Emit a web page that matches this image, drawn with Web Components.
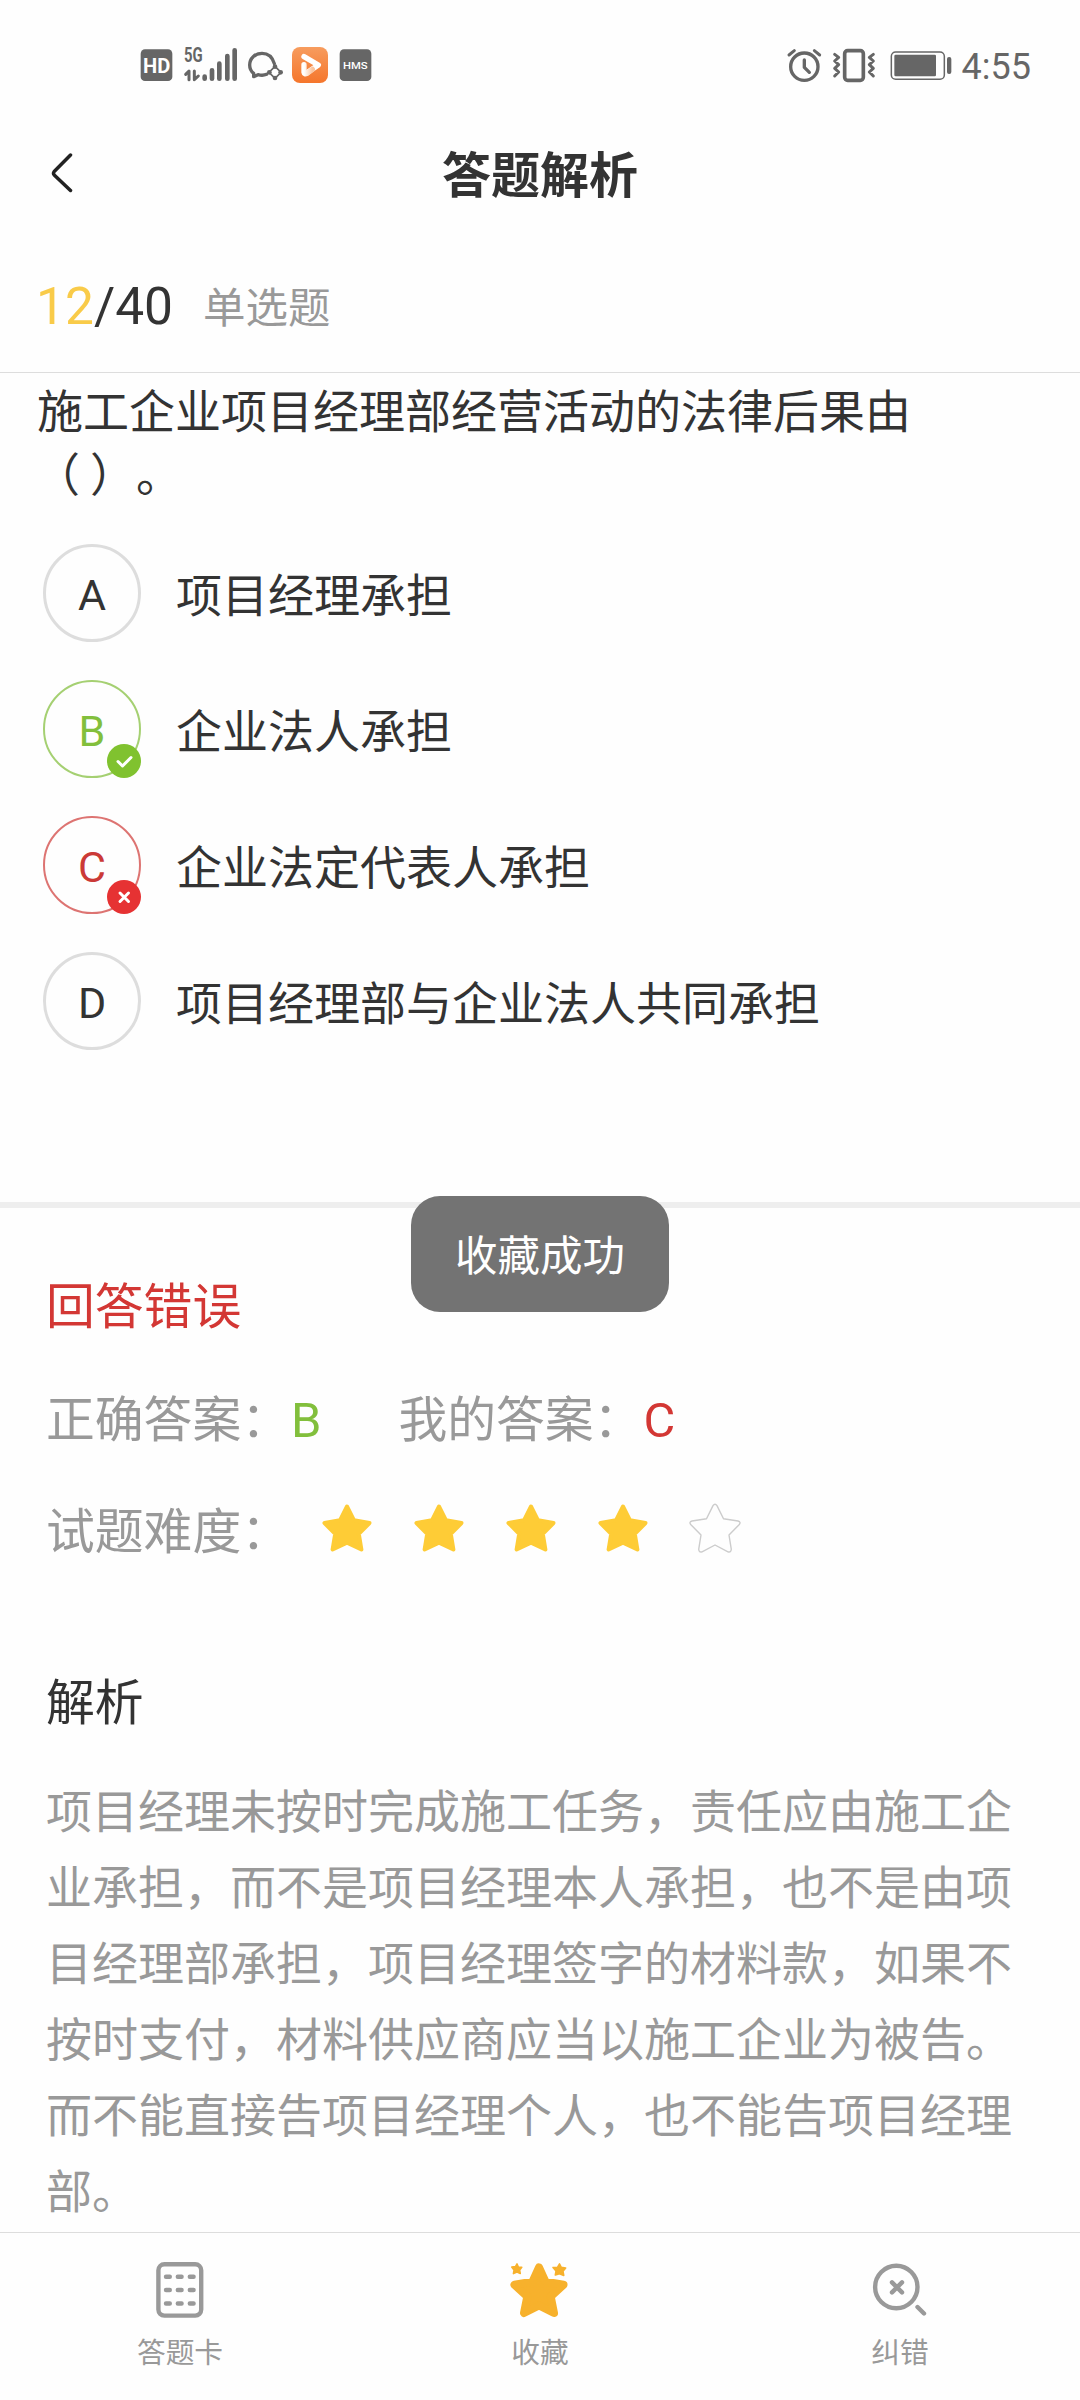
<!DOCTYPE html>
<html lang="zh-CN">
<head>
<meta charset="utf-8">
<title>答题解析</title>
<style>
    body {
        margin: 0;
        background: #fefefe;
        color: #333;
        font-family: Roboto, "Noto Sans CJK SC", sans-serif;
        text-spacing-trim: space-all;
    }
    .blank { margin-left: -3px; letter-spacing: 10px; }
</style>
</head>
<body>
<quiz-page>
    <status-bar time="4:55"></status-bar>
    <title-bar>答题解析</title-bar>
    <question-progress current="12" total="40">单选题</question-progress>
    <question-body>
        施工企业项目经理部经营活动的法律后果由<br><span class="blank">（</span>）。
        <answer-option slot="options" letter="A">项目经理承担</answer-option>
        <answer-option slot="options" letter="B" state="right">企业法人承担</answer-option>
        <answer-option slot="options" letter="C" state="wrong">企业法定代表人承担</answer-option>
        <answer-option slot="options" letter="D">项目经理部与企业法人共同承担</answer-option>
    </question-body>
    <answer-result right="B" mine="C" level="4">回答错误</answer-result>
    <answer-analysis heading="解析">项目经理未按时完成施工任务，责任应由施工企业承担，而不是项目经理本人承担，也不是由项目经理部承担，项目经理签字的材料款，如果不按时支付，材料供应商应当以施工企业为被告。而不能直接告项目经理个人，也不能告项目经理部。</answer-analysis>
    <tool-bar slot="footer">
        <tool-item icon="card">答题卡</tool-item>
        <tool-item icon="star">收藏</tool-item>
        <tool-item icon="search">纠错</tool-item>
    </tool-bar>
    <toast-message slot="toast">收藏成功</toast-message>
</quiz-page>

<script>
    class QuizPage extends HTMLElement {
        constructor() {
            super();
            this.attachShadow({ mode: 'open' });
            this.shadowRoot.innerHTML = `
                <style>
                    :host {
                        display: flex;
                        flex-direction: column;
                        position: relative;
                        width: 1080px;
                        height: 2400px;
                        overflow: hidden;
                    }
                    main { flex: 1; min-height: 0; overflow: hidden; }
                </style>
                <main><slot></slot></main>
                <slot name="footer"></slot>
                <slot name="toast"></slot>
            `;
        }
    }

    class StatusBar extends HTMLElement {
        constructor() {
            super();
            this.attachShadow({ mode: 'open' });
            this.shadowRoot.innerHTML = `
                <style>
                    :host {
                        display: flex;
                        justify-content: space-between;
                        box-sizing: border-box;
                        height: 130px;
                        padding: 46px 49px 0 140px;
                        color: #666;
                    }
                    div { display: flex; align-items: flex-start; height: 37px; }
                    svg { display: block; height: 37px; overflow: visible; fill: #666; }
                    .line { fill: none; stroke: #666; stroke-linecap: round; stroke-linejoin: round; }
                    time { font-size: 36px; line-height: 42px; margin-left: 10px; }
                </style>
                <div>
                    <svg width="33" viewBox="60 48 99 111">
                        <rect x="62" y="58" width="95" height="95" rx="13"/>
                        <text x="69" y="128" textLength="82" lengthAdjust="spacingAndGlyphs" font-size="61" font-weight="700" fill="#fff">HD</text>
                    </svg>
                    <svg width="54" viewBox="192 48 162 111" style="margin-left: 11px">
                        <text x="192" y="97" textLength="56" lengthAdjust="spacingAndGlyphs" font-size="58" font-weight="700">5G</text>
                        <path class="line" stroke-width="9" d="M197 133L207 123V149M223 123V149L235 138"/>
                        <path class="line" stroke-width="14" d="M254 140V146M276 121V146M298 101V146M322 78V146M344 61V146"/>
                    </svg>
                    <svg width="36" viewBox="384 48 108 111" style="margin-left: 10px">
                        <path class="line" stroke-width="10" d="M463 101C457 80 443 70 426 70C405 70 389 85 389 105C389 116 393 124 401 130V140L414 134C424 137 433 136 440 133"/>
                        <path class="line" stroke-width="5" d="M465 109L483 127L465 145L447 127Z"/>
                        <circle cx="465" cy="110" r="7"/><circle cx="482" cy="127" r="7"/>
                        <circle cx="465" cy="144" r="7"/><circle cx="448" cy="127" r="7"/>
                    </svg>
                    <svg width="36" viewBox="516 48 108 111" style="margin-left: 8px">
                        <defs>
                            <linearGradient id="orange" x2="0" y2="1"><stop stop-color="#f79c5e"/><stop offset="1" stop-color="#f5762c"/></linearGradient>
                            <linearGradient id="fade" x2="1" y2="0"><stop stop-color="#fff"/><stop offset="1" stop-color="#fbc59f"/></linearGradient>
                        </defs>
                        <rect x="516" y="51" width="108" height="108" rx="24" fill="url(#orange)"/>
                        <path d="M552 80L595 105L560 129" fill="none" stroke="#fff" stroke-width="16" stroke-linecap="round" stroke-linejoin="round"/>
                        <path d="M552 104V127Q553 134 561 130L577 118" fill="none" stroke="url(#fade)" stroke-width="16" stroke-linecap="round" stroke-linejoin="round"/>
                    </svg>
                    <svg width="33" viewBox="657 48 99 111" style="margin-left: 11px">
                        <rect x="659" y="58" width="95" height="95" rx="13"/>
                        <text x="669" y="116" textLength="74" lengthAdjust="spacingAndGlyphs" font-size="29" font-weight="500" fill="#fff">HMS</text>
                    </svg>
                </div>
                <div>
                    <svg width="35" viewBox="51 48 105 111">
                        <circle class="line" cx="103" cy="110" r="41" stroke-width="10"/>
                        <path class="line" stroke-width="10" d="M103 90V112L118 127"/>
                        <path class="line" stroke-width="9" d="M57 75L73 62M133 62L149 75"/>
                    </svg>
                    <svg width="44" viewBox="186 48 132 111" style="margin-left: 10px">
                        <rect class="line" x="224" y="62" width="56" height="89" rx="9" stroke-width="11"/>
                        <path class="line" stroke-width="9" d="M194 73L206 82L194 93L206 104L194 115L206 126L194 138M310 73L298 82L310 93L298 104L310 115L298 126L310 138"/>
                    </svg>
                    <svg width="62" viewBox="360 48 186 111" style="margin-left: 14px">
                        <rect class="line" x="364" y="66" width="159" height="82" rx="13" stroke-width="4.500"/>
                        <rect x="373" y="74" width="125" height="65" rx="4"/>
                        <rect x="531" y="81" width="13" height="51" rx="6"/>
                    </svg>
                    <time>${this.getAttribute('time')}</time>
                </div>
            `;
        }
    }

    class TitleBar extends HTMLElement {
        constructor() {
            super();
            this.attachShadow({ mode: 'open' });
            this.shadowRoot.innerHTML = `
                <style>
                    :host {
                        display: grid;
                        grid-template-columns: 100px 1fr 100px;
                        align-items: center;
                        height: 92px;
                    }
                    svg { margin-left: 50px; margin-top: -6px; }
                    h1 { margin: 2px 0 0; font-size: 49px; line-height: 60px; font-weight: 700; text-align: center; }
                </style>
                <svg width="24" height="40" viewBox="0 0 24 40" fill="none" stroke="#222" stroke-width="3.500" stroke-linecap="round" stroke-linejoin="round">
                    <path d="M20.500 2L4.200 18.500Q2.800 20.300 4.200 22L20.500 37.500"/>
                </svg>
                <h1><slot></slot></h1>
            `;
        }
    }

    class QuestionProgress extends HTMLElement {
        constructor() {
            super();
            this.attachShadow({ mode: 'open' });
            this.shadowRoot.innerHTML = `
                <style>
                    :host {
                        display: flex;
                        align-items: baseline;
                        box-sizing: border-box;
                        height: 151px;
                        padding: 55px 36px 0;
                        border-bottom: 1px solid #ddd;
                        font-size: 51.500px;
                        line-height: 60px;
                    }
                    b { font-weight: 400; color: #f9cb49; }
                    small { margin-left: 30px; font-size: 42.500px; line-height: 50px; color: #999; transform: translateY(-1px); }
                </style>
                <b>${this.getAttribute('current')}</b><span>/${this.getAttribute('total')}</span>
                <small><slot></slot></small>
            `;
        }
    }

    class QuestionBody extends HTMLElement {
        constructor() {
            super();
            this.attachShadow({ mode: 'open' });
            this.shadowRoot.innerHTML = `
                <style>
                    :host {
                        display: flex;
                        flex-direction: column;
                        box-sizing: border-box;
                        height: 835px;
                        padding: 8px 36px 0 37px;
                        border-bottom: 6px solid #eee;
                        font-size: 46px;
                    }
                    p { margin: 0; line-height: 63px; }
                    div { display: flex; flex-direction: column; padding: 18px 6px 0; }
                </style>
                <p><slot></slot></p>
                <div><slot name="options"></slot></div>
            `;
        }
    }

    class AnswerOption extends HTMLElement {
        constructor() {
            super();
            this.attachShadow({ mode: 'open' });
            const marks = {
                right: '<path d="M11 17.500L15.500 22L24 13.500"/>',
                wrong: '<path d="M13 13L21.500 21.500M21.500 13L13 21.500"/>'
            };
            const mark = marks[this.getAttribute('state')];
            this.shadowRoot.innerHTML = `
                <style>
                    :host { display: flex; align-items: center; gap: 35px; height: 136px; --tone: #333; --ring: #ddd; --badge: #ddd; }
                    :host([state="right"]) { --tone: #82bf3c; --ring: #a5d072; --badge: #80c22f; }
                    :host([state="wrong"]) { --tone: #cb3a37; --ring: #dd7472; --badge: #e63233; }
                    .letter {
                        position: relative;
                        box-sizing: border-box;
                        width: 98px;
                        height: 98px;
                        border: 3px solid var(--ring);
                        border-radius: 50%;
                        font-size: 43px;
                        line-height: 96px;
                        text-align: center;
                        color: var(--tone);
                    }
                    :host([state]) .letter { border-width: 2px; line-height: 98px; }
                    svg {
                        position: absolute;
                        right: -2px;
                        bottom: -2px;
                        border-radius: 50%;
                        background: var(--badge);
                        fill: none;
                        stroke: #fff;
                        stroke-width: 3;
                        stroke-linecap: round;
                        stroke-linejoin: round;
                    }
                    .text { line-height: 60px; padding-top: 6px; }
                </style>
                <span class="letter">${this.getAttribute('letter')}${mark ? `<svg width="34" height="34" viewBox="0 0 34 34">${mark}</svg>` : ''}</span>
                <span class="text"><slot></slot></span>
            `;
        }
    }

    class AnswerResult extends HTMLElement {
        constructor() {
            super();
            this.attachShadow({ mode: 'open' });
            this.shadowRoot.innerHTML = `
                <style>
                    :host { display: block; padding: 70px 46px 0; font-size: 48.800px; line-height: 60px; color: #999; }
                    h2 { margin: 0; font-size: inherit; font-weight: 400; color: #d33734; }
                    .row { display: flex; align-items: center; margin-top: 53px; }
                    .mine { margin-left: 77px; }
                    .right b { color: #82bf3c; }
                    .mine b { color: #d33734; }
                    b { font-weight: 400; margin-left: 1px; }
                    star-rating { margin-left: 31px; }
                    .row + .row { margin-top: 52px; }
                </style>
                <h2><slot></slot></h2>
                <div class="row">
                    <span class="right">正确答案：<b>${this.getAttribute('right')}</b></span>
                    <span class="mine">我的答案：<b>${this.getAttribute('mine')}</b></span>
                </div>
                <div class="row">
                    <span>试题难度：</span>
                    <star-rating value="${this.getAttribute('level')}"></star-rating>
                </div>
            `;
        }
    }

    class StarRating extends HTMLElement {
        constructor() {
            super();
            this.attachShadow({ mode: 'open' });
        }

        connectedCallback() {
            const value = Number(this.getAttribute('value'));
            const full = '<path class="on" d="M26 4.500L33 18.300L48.500 21L37.800 31.800L40.400 47.500L26 40.800L11.600 47.500L14.200 31.800L3.500 21L19 18.300Z"/>';
            const empty = '<path d="M24 3.600Q26 .800 28 3.600L34.500 16.800L49 19Q52.300 20 50.300 22.500L40 33L42.300 47.300Q42 50.800 39 49.800L26 43L13 49.800Q10 50.800 9.700 47.300L12 33L1.700 22.500Q-.300 20 3 19L17.500 16.800Z"/>';
            let stars = '';
            for (let i = 0; i < 5; i++) {
                stars += `<svg width="52" height="52" viewBox="0 0 52 52">${i < value ? full : empty}</svg>`;
            }
            this.shadowRoot.innerHTML = `
                <style>
                    :host { display: flex; gap: 40px; }
                    svg { display: block; margin-top: -11px; overflow: visible; }
                    path { fill: none; stroke: #ccc; stroke-width: 1.400; stroke-linejoin: round; }
                    .on { fill: #fecc36; stroke: #fecc36; stroke-width: 4; }
                </style>
                ${stars}
            `;
        }
    }

    class AnswerAnalysis extends HTMLElement {
        constructor() {
            super();
            this.attachShadow({ mode: 'open' });
            this.shadowRoot.innerHTML = `
                <style>
                    :host { display: block; padding: 111px 46px 0; }
                    h2 { margin: 0 0 40px; font-size: 48.800px; line-height: 60px; font-weight: 400; }
                    p { margin: 0; width: 970px; font-size: 46px; line-height: 76px; color: #999; }
                </style>
                <h2>${this.getAttribute('heading')}</h2>
                <p><slot></slot></p>
            `;
        }
    }

    class ToolBar extends HTMLElement {
        constructor() {
            super();
            this.attachShadow({ mode: 'open' });
            this.shadowRoot.innerHTML = `
                <style>
                    :host {
                        display: grid;
                        grid-template-columns: repeat(3, 1fr);
                        box-sizing: border-box;
                        height: 168px;
                        border-top: 1px solid #ddd;
                        background: #fefefe;
                    }
                </style>
                <slot></slot>
            `;
        }
    }

    class ToolItem extends HTMLElement {
        constructor() {
            super();
            this.attachShadow({ mode: 'open' });
            const icons = {
                card: `
                    <rect x="8.400" y="5.300" width="42.800" height="51.300" rx="6"/>
                    <path d="M16 17.700H19.800M27.800 17.700H31.600M39.800 17.700H43.600M16 31H19.800M27.800 31H31.600M39.800 31H43.600M16 44.500H19.800M27.800 44.500H31.600M39.800 44.500H43.600"/>`,
                star: `
                    <g fill="#f7b12c" stroke="#f7b12c">
                        <path stroke-width="8" d="M29 8.500L35.500 22.700L53.500 25.800L40.700 37.500L44 54L29 46.500L14 54L17.300 37.500L4.500 25.800L22.500 22.700Z"/>
                        <path stroke-width="1.500" d="M7 4.800L8.400 8L11.800 8.300L9.700 11L10.300 14.600L7 13L3.400 14.600L4 11L1.700 8L5.400 7.600Z"/>
                        <path stroke-width="1.500" d="M49.500 4.800L51.300 8.300L55.700 9L53 12.200L53.800 16.500L49.500 14.700L45.300 16L46 12L43 8.400L47.600 8.200Z"/>
                    </g>`,
                search: `
                    <circle cx="26.300" cy="28" r="21.200"/>
                    <path d="M22 23.400L32 33.400M32 23.400L22 33.400M47.500 48L54 54.500"/>`
            };
            this.shadowRoot.innerHTML = `
                <style>
                    :host { display: flex; flex-direction: column; align-items: center; padding-top: 26px; font-size: 28.700px; line-height: 36px; color: #999; }
                    svg { display: block; margin-bottom: 16px; fill: none; stroke: #999; stroke-width: 4.400; stroke-linecap: round; stroke-linejoin: round; }
                </style>
                <svg width="60" height="60" viewBox="0 0 60 60">${icons[this.getAttribute('icon')]}</svg>
                <span><slot></slot></span>
            `;
        }
    }

    class ToastMessage extends HTMLElement {
        constructor() {
            super();
            this.attachShadow({ mode: 'open' });
            this.shadowRoot.innerHTML = `
                <style>
                    :host {
                        position: absolute;
                        top: 1196px;
                        left: 411px;
                        width: 258px;
                        height: 116px;
                        border-radius: 29px;
                        background: #737373;
                        color: #fff;
                        font-size: 42.500px;
                        line-height: 122px;
                        text-align: center;
                    }
                </style>
                <slot></slot>
            `;
        }
    }

    customElements.define('status-bar', StatusBar);
    customElements.define('title-bar', TitleBar);
    customElements.define('question-progress', QuestionProgress);
    customElements.define('answer-option', AnswerOption);
    customElements.define('question-body', QuestionBody);
    customElements.define('star-rating', StarRating);
    customElements.define('answer-result', AnswerResult);
    customElements.define('answer-analysis', AnswerAnalysis);
    customElements.define('tool-item', ToolItem);
    customElements.define('tool-bar', ToolBar);
    customElements.define('toast-message', ToastMessage);
    customElements.define('quiz-page', QuizPage);
</script>
</body>
</html>
